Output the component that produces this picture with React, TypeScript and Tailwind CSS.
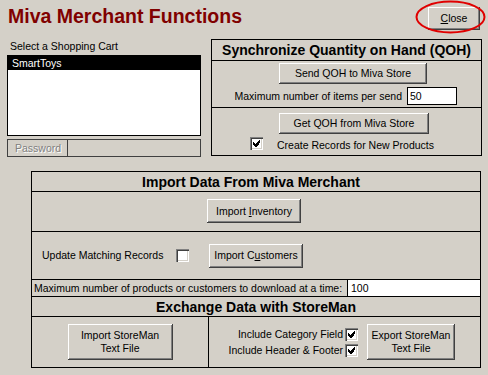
import React from "react"
import clsx from "clsx"

function Btn({ className, children }: { className?: string; children: React.ReactNode }) {
  return (
    <div
      className={clsx(
        "flex items-center justify-center bg-[#d4d0c8] text-center text-[10.5px] leading-[13px] text-black shadow-[inset_-1px_-1px_#404040,inset_1px_1px_#ffffff,inset_-2px_-2px_#808080]",
        className
      )}
    >
      {children}
    </div>
  )
}

function Check({ checked = false }: { checked?: boolean }) {
  return (
    <div className="relative h-[13px] w-[13px] shrink-0 bg-white shadow-[inset_1px_1px_#808080,inset_2px_2px_#404040,inset_-1px_-1px_#ffffff,inset_-2px_-2px_#d4d0c8]">
      {checked && (
        <svg className="absolute left-[3px] top-[3px]" width="7" height="7" viewBox="0 0 7 7" shapeRendering="crispEdges">
          <path
            fill="#000"
            d="M6 0h1v3h-1zM5 1h1v4h-1zM4 2h1v4h-1zM3 3h1v4h-1zM2 4h1v3h-1zM1 3h1v3h-1zM0 2h1v3h-1z"
          />
        </svg>
      )}
    </div>
  )
}

export default function App() {
  return (
    <div className="relative h-[375px] w-[488px] overflow-hidden bg-[#d4d0c8] font-['Liberation_Sans',Arial,sans-serif] text-black">
      {/* top: cart picker + sync panel */}
      <div className="flex items-start">
        <div className="ml-[7px] flex w-[194px] flex-col">
          <div className="ml-[1px] mt-[6px] h-[20px] whitespace-nowrap text-[19.5px] font-bold leading-[20px] text-[#800000]">
            Miva Merchant Functions
          </div>
          <div className="ml-[3px] mt-[14px] text-[10.5px] leading-[13px]">Select a Shopping Cart</div>
          <div className="mt-[2px] h-[81px] border border-black bg-white">
            <div className="h-[14px] bg-black pl-[4px] text-[10.5px] leading-[14px] text-white">SmartToys</div>
          </div>
          <div className="mt-[3px] flex h-[18px] border border-[#404040]">
            <div className="w-[60px] border-r border-[#404040] pl-[7px] text-[10.5px] leading-[16px] text-[#808080] [text-shadow:1px_1px_0_#ffffff]">
              Password
            </div>
          </div>
        </div>

        <div className="ml-[10px] flex w-[271px] flex-col pt-[7px]">
          <Btn className="mr-[2px] h-[23px] w-[52px] self-end">
            <span>
              <span className="underline">C</span>lose
            </span>
          </Btn>
          <div className="mt-[9px] flex h-[117px] flex-col border border-black">
            <div className="flex h-[21px] items-center justify-center border-b border-black text-[14px] font-bold leading-[16px]">
              Synchronize Quantity on Hand (QOH)
            </div>
            <div className="flex h-[47px] flex-col border-b border-black">
              <Btn className="ml-[67px] mt-[2px] h-[21px] w-[148px]">Send QOH to Miva Store</Btn>
              <div className="mt-[3px] flex items-center justify-end gap-[5px] pr-[24px]">
                <span className="whitespace-nowrap text-[10.5px] leading-[13px]">Maximum number of items per send</span>
                <div className="h-[18px] w-[50px] border border-black bg-white pl-[2px] text-[10.5px] leading-[16px]">50</div>
              </div>
            </div>
            <div className="flex flex-1 flex-col">
              <Btn className="ml-[67px] mt-[5px] h-[21px] w-[150px]">Get QOH from Miva Store</Btn>
              <div className="ml-[38px] mt-[3px] flex items-start">
                <Check checked />
                <span className="ml-[14px] mt-[2px] text-[10.5px] leading-[13px]">Create Records for New Products</span>
              </div>
            </div>
          </div>
        </div>
      </div>

      {/* import / exchange panel */}
      <div className="ml-[31px] mt-[14px] flex h-[197px] w-[450px] flex-col border border-black">
        <div className="flex h-[20px] items-center justify-center border-b border-black pr-[10px] text-[14px] font-bold leading-[16px]">
          Import Data From Miva Merchant
        </div>
        <div className="h-[40px] border-b border-black pt-[7px]">
          <Btn className="ml-[175px] h-[24px] w-[94px]">
            <span>
              Import <span className="underline">I</span>nventory
            </span>
          </Btn>
        </div>
        <div className="flex h-[48px] items-center border-b border-black pl-[10px]">
          <span className="w-[134px] text-[10.5px] leading-[13px]">Update Matching Records</span>
          <Check />
          <Btn className="ml-[20px] h-[24px] w-[94px]">
            <span>
              Import C<span className="underline">u</span>stomers
            </span>
          </Btn>
        </div>
        <div className="flex h-[17px] border-b border-black">
          <span className="whitespace-nowrap pl-[2px] text-[10.5px] leading-[16px]">
            Maximum number of products or customers to download at a time:
          </span>
          <div className="ml-auto w-[133px] border-l border-black bg-white pl-[3px] text-[10.5px] leading-[16px]">100</div>
        </div>
        <div className="flex h-[20px] items-center justify-center border-b border-black text-[14px] font-bold leading-[16px]">
          Exchange Data with StoreMan
        </div>
        <div className="flex flex-1">
          <div className="flex w-[177px] items-center justify-center border-r border-black">
            <Btn className="h-[36px] w-[105px]">
              Import StoreMan
              <br />
              Text File
            </Btn>
          </div>
          <div className="flex flex-1 items-center justify-end pr-[25px]">
            <div className="flex flex-col items-end gap-[3px]">
              <div className="flex items-center gap-[2px]">
                <span className="text-[10.5px] leading-[13px]">Include Category Field</span>
                <Check checked />
              </div>
              <div className="flex items-center gap-[2px]">
                <span className="text-[10.5px] leading-[13px]">Include Header &amp; Footer</span>
                <Check checked />
              </div>
            </div>
            <Btn className="ml-[9px] h-[36px] w-[88px]">
              Export StoreMan
              <br />
              Text File
            </Btn>
          </div>
        </div>
      </div>

      {/* red annotation ring around Close */}
      <svg className="pointer-events-none absolute left-0 top-0" width="488" height="375">
        <ellipse cx="450.5" cy="17" rx="34" ry="15.5" fill="none" stroke="#e00000" strokeWidth="2" />
      </svg>
    </div>
  )
}
